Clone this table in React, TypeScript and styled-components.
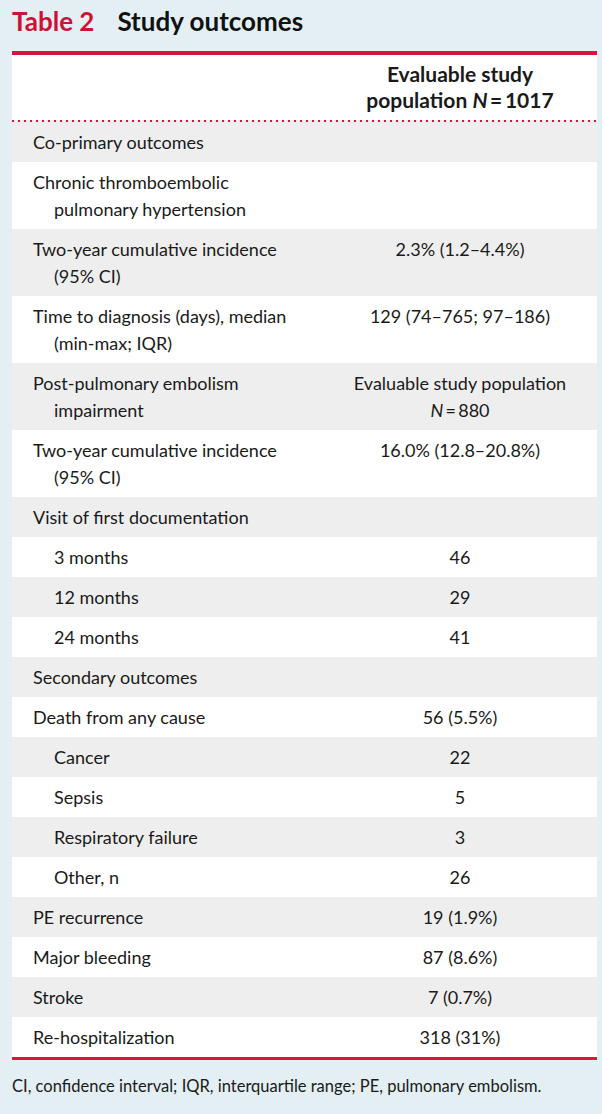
import React from "react";
import styled, { createGlobalStyle } from "styled-components";

const Global = createGlobalStyle`
  html, body { margin: 0; padding: 0; background: #e3eff3; }
  body { font-family: "Lato", "Open Sans", sans-serif; color: #1a1a1a; }
`;

const Page = styled.div`
  width: 602px;
  height: 1114px;
  background: #e3eff3;
  box-sizing: border-box;
  padding: 0 5px 0 12px;
`;

const Title = styled.h1`
  margin: 0;
  height: 51px;
  display: flex;
  align-items: center;
  gap: 23px;
  font-size: 26px;
  font-weight: 700;
  padding-bottom: 9px;
  box-sizing: border-box;
`;

const TitleLabel = styled.span`
  color: #cc1237;
`;

const TitleText = styled.span`
  color: #111;
`;

const Panel = styled.div`
  background: #fff;
  border-top: 4px solid #d7143c;
  border-bottom: 3px solid #d7143c;
`;

const Row = styled.div<{ $shade: boolean }>`
  display: grid;
  grid-template-columns: 1fr 274px;
  background: ${(p) => (p.$shade ? "#eeeeee" : "#ffffff")};
  padding: 6.5px 0;
  font-size: 18px;
  line-height: 27px;
`;

const HeaderRow = styled.div`
  display: grid;
  grid-template-columns: 1fr 274px;
  height: 63px;
  align-items: center;
  font-size: 21px;
  font-weight: 700;
  line-height: 26px;
  padding-bottom: 2px;
`;

const Dots = styled.div`
  height: 2px;
  background: #eeeeee;
  background-image: radial-gradient(circle, #d7143c 1px, transparent 1.4px);
  background-size: 6px 2px;
  background-position: 10px 0;
  background-repeat: repeat-x;
`;

const LabelCell = styled.div<{ $indent: boolean }>`
  padding-left: ${(p) => (p.$indent ? 42 : 21)}px;
`;

const HangLine = styled.div<{ $hang: boolean }>`
  padding-left: ${(p) => (p.$hang ? 21 : 0)}px;
`;

const ValueCell = styled.div`
  text-align: center;
`;

const Footnote = styled.p`
  margin: 0;
  padding-top: 16px;
  font-size: 16.5px;
  color: #1a1a1a;
`;

type RowData = { label: string[]; value?: React.ReactNode; indent?: boolean };

const rows: RowData[] = [
  { label: ["Co-primary outcomes"] },
  { label: ["Chronic thromboembolic", "pulmonary hypertension"] },
  { label: ["Two-year cumulative incidence", "(95% CI)"], value: "2.3% (1.2–4.4%)" },
  { label: ["Time to diagnosis (days), median", "(min-max; IQR)"], value: "129 (74–765; 97–186)" },
  {
    label: ["Post-pulmonary embolism", "impairment"],
    value: (
      <>
        Evaluable study population
        <br />
        <i>N</i>&thinsp;=&thinsp;880
      </>
    ),
  },
  { label: ["Two-year cumulative incidence", "(95% CI)"], value: "16.0% (12.8–20.8%)" },
  { label: ["Visit of first documentation"] },
  { label: ["3 months"], value: "46", indent: true },
  { label: ["12 months"], value: "29", indent: true },
  { label: ["24 months"], value: "41", indent: true },
  { label: ["Secondary outcomes"] },
  { label: ["Death from any cause"], value: "56 (5.5%)" },
  { label: ["Cancer"], value: "22", indent: true },
  { label: ["Sepsis"], value: "5", indent: true },
  { label: ["Respiratory failure"], value: "3", indent: true },
  { label: ["Other, n"], value: "26", indent: true },
  { label: ["PE recurrence"], value: "19 (1.9%)" },
  { label: ["Major bleeding"], value: "87 (8.6%)" },
  { label: ["Stroke"], value: "7 (0.7%)" },
  { label: ["Re-hospitalization"], value: "318 (31%)" },
];

export default function App() {
  return (
    <>
      <Global />
      <Page>
        <Title>
          <TitleLabel>Table 2</TitleLabel>
          <TitleText>Study outcomes</TitleText>
        </Title>
        <Panel>
          <HeaderRow>
            <div />
            <ValueCell>
              Evaluable study
              <br />
              population <i>N</i>&thinsp;=&thinsp;1017
            </ValueCell>
          </HeaderRow>
          <Dots />
          {rows.map((r, i) => (
            <Row key={i} $shade={i % 2 === 0}>
              <LabelCell $indent={!!r.indent}>
                {r.label.map((l, j) => (
                  <HangLine key={j} $hang={j > 0}>
                    {l}
                  </HangLine>
                ))}
              </LabelCell>
              <ValueCell>{r.value}</ValueCell>
            </Row>
          ))}
        </Panel>
        <Footnote>CI, confidence interval; IQR, interquartile range; PE, pulmonary embolism.</Footnote>
      </Page>
    </>
  );
}
